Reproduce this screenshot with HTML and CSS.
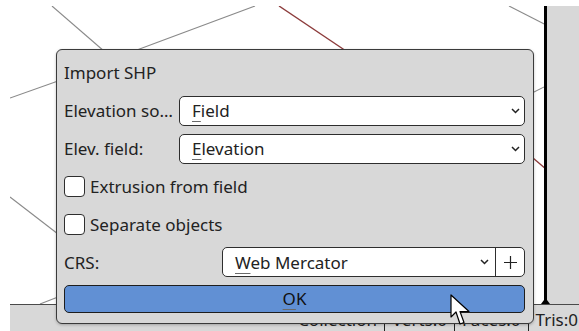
FILE: index.html
```html
<!DOCTYPE html>
<html>
<head>
<meta charset="utf-8">
<link rel="stylesheet" href="styles.css">
</head>
<body>
<div class="app">
  <div class="main">
    <div class="viewport">
      <svg class="scene" width="534" height="298" viewBox="0 0 534 298">
        <g transform="translate(-10,-6)">
          <line x1="52" y1="6" x2="112" y2="58" class="ln"/>
          <line x1="255" y1="6" x2="110" y2="60" class="ln"/>
          <line x1="279" y1="6" x2="352" y2="55" class="ln red"/>
          <line x1="509" y1="6" x2="546" y2="25" class="ln"/>
          <line x1="10" y1="98" x2="58" y2="81" class="ln"/>
          <line x1="532" y1="93" x2="546" y2="86" class="ln"/>
          <line x1="533" y1="158" x2="546" y2="169" class="ln red"/>
          <line x1="10" y1="197" x2="58" y2="234" class="ln"/>
          <line x1="40" y1="304" x2="58" y2="297" class="ln"/>
        </g>
      </svg>
      <svg class="foot" width="9" height="5" viewBox="0 0 9 5"><path d="M0 5 L3 1 L3 0 L6 0 L6 1 L9 5 Z" fill="#000"/></svg>
    </div>
    <div class="panel"></div>
  </div>
  <div class="status">
    <span class="seg">Collection</span>
    <span class="seg">Verts:0</span>
    <span class="seg">Faces:0</span>
    <span class="seg last">Tris:0</span>
  </div>
</div>

<div class="dialog">
  <div class="title">Import SHP</div>
  <div class="row form-row">
    <span class="label">Elevation so…</span>
    <div class="combo">
      <span class="val"><u>F</u>ield</span>
      <svg class="chev" width="9" height="6" viewBox="0 0 9 6"><polyline points="1,1 4.5,4.5 8,1" fill="none" stroke="#222" stroke-width="1.5"/></svg>
    </div>
  </div>
  <div class="row form-row">
    <span class="label">Elev. field:</span>
    <div class="combo">
      <span class="val"><u>E</u>levation</span>
      <svg class="chev" width="9" height="6" viewBox="0 0 9 6"><polyline points="1,1 4.5,4.5 8,1" fill="none" stroke="#222" stroke-width="1.5"/></svg>
    </div>
  </div>
  <div class="row check"><span class="box"></span><span>Extrusion from field</span></div>
  <div class="row check"><span class="box"></span><span>Separate objects</span></div>
  <div class="row form-row">
    <span class="label wide">CRS:</span>
    <div class="combo">
      <span class="val"><u>W</u>eb Mercator</span>
      <svg class="chev crs" width="9" height="6" viewBox="0 0 9 6"><polyline points="1,1 4.5,4.5 8,1" fill="none" stroke="#222" stroke-width="1.5"/></svg>
      <span class="plus"><svg width="13" height="13" viewBox="0 0 13 13"><path d="M6.5 0 V13 M0 6.5 H13" stroke="#222" stroke-width="1.2"/></svg></span>
    </div>
  </div>
  <div class="ok"><span><u>O</u>K</span></div>
</div>

<svg class="cursor" width="22" height="33" viewBox="0 0 22 33">
  <path d="M1 1 L1 23 L6 18 L10 30 L14 28.5 L10 17.5 L19 17.5 Z" fill="#fff" stroke="#000" stroke-width="1.2" stroke-linejoin="round"/>
</svg>
</body>
</html>
```

FILE: styles.css
```css
* { box-sizing: border-box; }
html, body {
  margin: 0;
  padding: 0;
  width: 579px;
  height: 331px;
  overflow: hidden;
  background: #ffffff;
  font-family: "Noto Sans", "Open Sans", sans-serif;
  font-size: 17px;
  color: #222;
}
.app {
  display: flex;
  flex-direction: column;
  height: 331px;
}
.main {
  display: flex;
  margin-top: 6px;
  height: 298px;
}
.viewport {
  position: relative;
  margin-left: 10px;
  flex: 1;
  background: #fff;
  border-right: 3px solid #000;
}
.scene {
  position: absolute;
  left: 0;
  top: 0;
}
.ln {
  stroke: #8a8a8a;
  stroke-width: 1.1;
}
.ln.red {
  stroke: #8c3b3b;
  stroke-width: 1.4;
}
.foot {
  position: absolute;
  right: -6px;
  bottom: 0;
}
.panel {
  width: 32px;
  background: #d8d8d8;
}
.status {
  margin-left: 10px;
  flex: 1;
  background: #d8d8d8;
  border-top: 1px solid #4a4a4a;
  display: flex;
  justify-content: flex-end;
  align-items: flex-end;
  line-height: 23px;
  padding-bottom: 0;
}
.seg {
  padding: 0 7px;
  border-left: 1px solid #222;
  white-space: nowrap;
}
.seg:first-child { border-left: none; }
.seg.last { padding-right: 1px; }

.dialog {
  position: absolute;
  left: 56px;
  top: 49px;
  width: 478px;
  background: #d8d8d8;
  border: 1px solid #3a3a3a;
  border-radius: 6px;
  box-shadow: 0 1px 3px rgba(0,0,0,0.25);
  padding: 11px 8px 10px 7px;
  display: flex;
  flex-direction: column;
  gap: 7.8px;
}
.title {
  line-height: 23px;
  margin-bottom: 4.2px;
}
.row {
  height: 30px;
  display: flex;
  align-items: center;
}
.label {
  width: 115px;
  flex: none;
  white-space: nowrap;
}
.label.wide { width: 158px; }
.combo {
  flex: 1;
  height: 30px;
  background: #fff;
  border: 1px solid #2e2e2e;
  border-radius: 5px;
  display: flex;
  align-items: center;
  padding-left: 12px;
}
.val { white-space: nowrap; }
u {
  text-decoration: underline;
  text-decoration-color: #6a6a6a;
  text-decoration-thickness: 1px;
  text-underline-offset: 4px;
}
.chev {
  margin-left: auto;
  margin-right: 4px;
}
.chev.crs { margin-right: 6px; }
.plus {
  width: 29px;
  height: 28px;
  border-left: 1px solid #2e2e2e;
  display: flex;
  align-items: center;
  justify-content: center;
}
.check .box {
  width: 21px;
  height: 21px;
  background: #fff;
  border: 1px solid #2e2e2e;
  border-radius: 4px;
  margin-right: 5px;
  flex: none;
}
.ok {
  height: 28px;
  background: #6190d4;
  border: 1px solid #1e1e1e;
  border-radius: 5px;
  display: flex;
  align-items: center;
  justify-content: center;
  color: #111;
}
.cursor {
  position: absolute;
  left: 450px;
  top: 294px;
}
```
